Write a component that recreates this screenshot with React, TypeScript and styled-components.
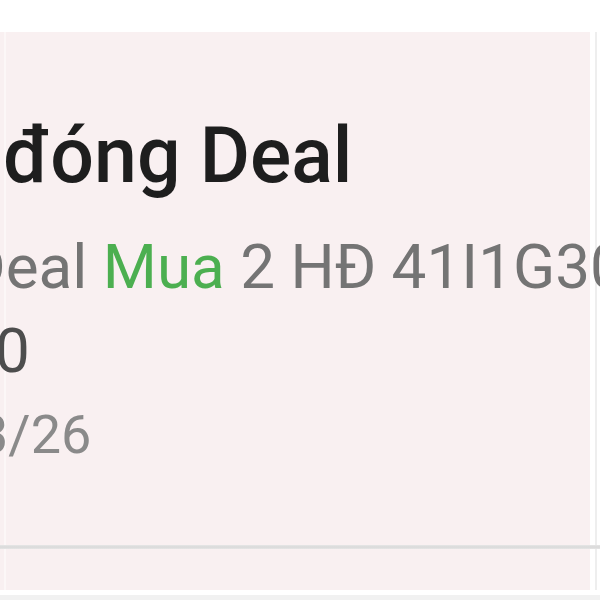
import React from "react";
import styled, { createGlobalStyle } from "styled-components";

const GlobalStyle = createGlobalStyle`
  html, body { margin: 0; padding: 0; background: #ffffff; }
  body { font-family: Roboto, "Noto Sans", "Liberation Sans", sans-serif; }
`;

const PINK = "#f9f0f1";

const Page = styled.div`
  width: 600px;
  height: 600px;
  overflow: hidden;
  display: flex;
  flex-direction: column;
  background: #ffffff;
`;

const TopSpace = styled.div`
  height: 32px;
  flex: 0 0 auto;
`;

const ItemRow = styled.div<{ $h: number }>`
  height: ${(p) => p.$h}px;
  flex: 0 0 auto;
  background: linear-gradient(
    to right,
    ${PINK} 0 4px,
    #fcf7f7 4px 6px,
    ${PINK} 6px 590px,
    #ffffff 590px 595px,
    #eeeeee 595px 597px,
    #ffffff 597px
  );
`;

const Content = styled.div`
  width: 590px;
  display: flex;
  flex-direction: column;
  padding-top: 74px;
  box-sizing: border-box;
`;

const Divider = styled.div`
  height: 4px;
  flex: 0 0 auto;
  background: linear-gradient(to bottom, #e6e6e6, #d9d9d9 50%, #e6e6e6);
`;

const BottomGap = styled.div`
  height: 5px;
  flex: 0 0 auto;
`;

const BottomEdge = styled.div`
  flex: 1 1 auto;
  background: #f1f1f1;
`;

const Title = styled.div`
  font-size: 77px;
  line-height: 100px;
  font-weight: 500;
  color: #1e1e1e;
  white-space: nowrap;
  margin-left: 3px;
`;

const Line = styled.div<{ $size: number; $color: string; $indent: number; $weight?: number }>`
  font-size: ${(p) => p.$size}px;
  line-height: 84px;
  color: ${(p) => p.$color};
  font-weight: ${(p) => p.$weight ?? 400};
  margin-left: ${(p) => p.$indent}px;
  white-space: nowrap;
`;

const SubLine = styled(Line)`
  margin-top: 19px;
`;

const Highlight = styled.span`
  color: #4caf50;
`;

export default function App() {
  return (
    <>
      <GlobalStyle />
      <Page>
        <TopSpace />
        <ItemRow $h={513}>
          <Content>
            <Title>đóng Deal</Title>
            <SubLine $size={62} $color="#747474" $indent={-35}>
              Deal <Highlight>Mua</Highlight> 2 HĐ 41I1G30
            </SubLine>
            <Line $size={62} $color="#4d4d4d" $indent={-5}>
              0
            </Line>
            <Line $size={54} $color="#8a8a8a" $indent={-22}>
              3/26
            </Line>
          </Content>
        </ItemRow>
        <Divider />
        <ItemRow $h={41} />
        <BottomGap />
        <BottomEdge />
      </Page>
    </>
  );
}
